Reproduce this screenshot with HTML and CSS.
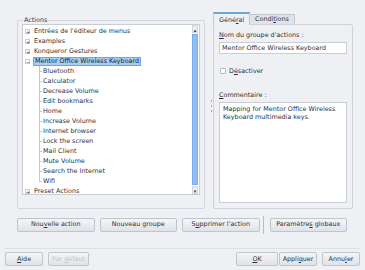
FILE: index.html
```html
<!DOCTYPE html>
<html lang="fr">
  <head>
    <meta charset="utf-8" />
    <title>Actions de saisie</title>
    <link rel="stylesheet" href="styles.css">
  </head>
  <body>
    <div class="dialog">
      <div class="top">
        <fieldset class="group">
          <legend>Actions</legend>
          <div class="tree">
            <ul class="rows">
              <li class="node"><span class="exp">+</span><span class="label">Entrées de l'éditeur de menus</span></li>
              <li class="node"><span class="exp">+</span><span class="label">Examples</span></li>
              <li class="node"><span class="exp">+</span><span class="label">Konqueror Gestures</span></li>
              <li class="node"><span class="exp">−</span><span class="label selected">Mentor Office Wireless Keyboard</span></li>
              <li class="leaf"><span class="label">Bluetooth</span></li>
              <li class="leaf"><span class="label">Calculator</span></li>
              <li class="leaf"><span class="label">Decrease Volume</span></li>
              <li class="leaf"><span class="label">Edit bookmarks</span></li>
              <li class="leaf"><span class="label">Home</span></li>
              <li class="leaf"><span class="label">Increase Volume</span></li>
              <li class="leaf"><span class="label">Internet browser</span></li>
              <li class="leaf"><span class="label">Lock the screen</span></li>
              <li class="leaf"><span class="label">Mail Client</span></li>
              <li class="leaf"><span class="label">Mute Volume</span></li>
              <li class="leaf"><span class="label">Search the Internet</span></li>
              <li class="leaf last"><span class="label">Wifi</span></li>
              <li class="node"><span class="exp">+</span><span class="label">Preset Actions</span></li>
            </ul>
            <div class="scrollbar">
              <div class="arrow">&#9652;</div>
              <div class="thumb"></div>
              <div class="arrow">&#9662;</div>
            </div>
          </div>
        </fieldset>

        <div class="splitter"><span></span><span></span><span></span></div>

        <div class="tabs">
          <div class="tabbar">
            <div class="tab active">Géné<u>r</u>al</div>
            <div class="tab">Condi<u>t</u>ions</div>
          </div>
          <div class="panel">
            <div class="field-label"><u>N</u>om du groupe d'actions :</div>
            <div class="input">Mentor Office Wireless Keyboard</div>
            <label class="check"><span class="box"></span>D<u>é</u>sactiver</label>
            <div class="field-label"><u>C</u>ommentaire :</div>
            <div class="textarea">Mapping for Mentor Office Wireless Keyboard multimedia keys.</div>
          </div>
        </div>
      </div>

      <div class="actions">
        <button class="btn">Nou<u>v</u>elle action</button>
        <button class="btn">Nouveau groupe</button>
        <button class="btn">S<u>u</u>pprimer l'action</button>
        <span class="vsep"></span>
        <button class="btn">Paramètre<u>s</u> globaux</button>
      </div>

      <div class="footer">
        <button class="btn small"><u>A</u>ide</button>
        <button class="btn small" disabled>Par <u>d</u>éfaut</button>
        <span class="spacer"></span>
        <button class="btn small"><u>O</u>K</button>
        <button class="btn small">Appli<u>q</u>uer</button>
        <button class="btn small">Annu<u>l</u>er</button>
      </div>
    </div>
  </body>
</html>
```
FILE: styles.css
```css
html, body {
  margin: 0;
  padding: 0;
}

body {
  width: 365px;
  height: 270px;
  background: #eef0f4;
  color: #2e3238;
  font: 6.4px / 1 "DejaVu Sans", sans-serif;
  overflow: hidden;
}

* {
  box-sizing: border-box;
}

u {
  text-decoration: underline;
  text-underline-offset: 1px;
}

.dialog {
  display: flex;
  flex-direction: column;
}

.top {
  display: flex;
  padding: 11px 12px 0 17px;
  height: 209px;
}

/* left group box */
.group {
  width: 188px;
  margin: 6px 0 0;
  padding: 0 4px 4px 4px;
  border: 1px solid #d3d7df;
  border-radius: 2px;
  min-width: 0;
}

.group legend {
  padding: 0 1px;
  margin-left: 1px;
  color: #33373d;
}

.tree {
  display: flex;
  height: 171px;
  background: #fff;
  border: 1px solid #c9cdd5;
  margin-top: 1px;
  overflow: hidden;
}

.rows {
  flex: 1;
  list-style: none;
  margin: 1px 0 0;
  padding: 0;
}

.rows li {
  height: 10px;
  display: flex;
  align-items: center;
  white-space: nowrap;
  position: relative;
}

.node .exp {
  width: 5px;
  height: 5px;
  margin: 0 3px 0 2px;
  font-size: 5px;
  line-height: 4px;
  text-align: center;
  color: #444;
  border: 1px solid #c8ccd2;
}

.label {
  padding: 1px 1px;
}

.selected {
  background: #a8cdf4;
  border: 1px solid #6ea4e0;
  padding: 0 1px;
  color: #1a1d22;
}

.leaf {
  padding-left: 19px;
}

.leaf::before {
  content: "";
  position: absolute;
  left: 16px;
  top: 0;
  width: 1px;
  height: 10px;
  background: #c4c8ce;
}

.leaf.last::before {
  height: 5px;
}

.leaf::after {
  content: "";
  position: absolute;
  left: 16px;
  top: 5px;
  width: 3px;
  height: 1px;
  background: #c4c8ce;
}

.scrollbar {
  width: 8px;
  display: flex;
  flex-direction: column;
  padding: 0 1px;
  background: #fff;
}

.arrow {
  height: 8px;
  font-size: 5px;
  line-height: 8px;
  text-align: center;
  color: #333;
  background: #eceef2;
  border: 1px solid #d2d6dc;
}

.thumb {
  flex: 1;
  background: #8fbcf2;
  border: 1px solid #7aaee8;
  margin: 1px 0;
}

/* splitter */
.splitter {
  width: 8px;
  display: flex;
  flex-direction: column;
  justify-content: center;
  align-items: flex-end;
  gap: 3px;
  padding: 0 1px 8px 0;
}

.splitter span {
  width: 1px;
  height: 2px;
  background: #7aaee8;
}

/* tab widget */
.tabs {
  width: 140px;
  display: flex;
  flex-direction: column;
}

.tabbar {
  display: flex;
  align-items: flex-end;
  height: 13px;
}

.tab {
  padding: 0 4px;
  height: 10px;
  line-height: 9px;
  background: #dfe3ea;
  border: 1px solid #c3c8d0;
  border-bottom: none;
  margin-left: -1px;
}

.tab.active {
  height: 13px;
  line-height: 12px;
  width: 37px;
  margin-left: 0;
  background: #eef0f4;
  border-top: 2px solid #6ea4e0;
  position: relative;
  z-index: 1;
  margin-bottom: -1px;
  padding: 0 5px;
}

.tab:not(.active) {
  width: 46px;
  text-align: center;
}

.panel {
  flex: 1;
  border: 1px solid #cdd1d8;
  border-radius: 0 2px 2px 2px;
  padding: 5px 5px 5px 5px;
  display: flex;
  flex-direction: column;
}

.field-label {
  height: 8px;
  margin-top: 2px;
}

.input {
  height: 12px;
  margin-top: 2px;
  padding: 0 2px;
  line-height: 11px;
  background: #fff;
  border: 1px solid #c9cdd5;
  white-space: nowrap;
}

.check {
  display: flex;
  align-items: center;
  margin-top: 13px;
  height: 8px;
}

.box {
  width: 6px;
  height: 6px;
  margin: 0 3px 0 1px;
  border: 1px solid #b8bcc4;
  background: #fff;
  border-radius: 1px;
}

.check + .field-label {
  margin-top: 17px;
}

.textarea {
  flex: 1;
  margin-top: 2px;
  padding: 2px 3px;
  line-height: 8px;
  background: #fff;
  border: 1px solid #c9cdd5;
}

/* buttons */
.btn {
  font: inherit;
  color: #2e3238;
  height: 14px;
  padding: 0 1px;
  white-space: nowrap;
  background: linear-gradient(#f4f5f7, #dfe2e7);
  border: 1px solid #c0c4cb;
  border-radius: 2px;
}

.btn:disabled {
  color: #c2c6cd;
}

.actions {
  display: flex;
  align-items: center;
  gap: 5px;
  padding: 8px 18px 0 17px;
  height: 23px;
}

.actions .btn {
  width: 78px;
}

.vsep {
  width: 1px;
  height: 18px;
  background: #b8bcc4;
  margin: 0 1px 0 -2px;
}

.footer {
  display: flex;
  align-items: center;
  gap: 5px;
  margin: 16px 5px 0;
  padding-top: 3px;
  border-top: 1px solid #dde0e6;
}

.footer .btn {
  width: 38px;
}

.footer .btn:disabled {
  width: 41px;
}

.footer .btn:nth-child(4) {
  width: 42px;
  margin-right: -4px;
}

.spacer {
  flex: 1;
}
```
